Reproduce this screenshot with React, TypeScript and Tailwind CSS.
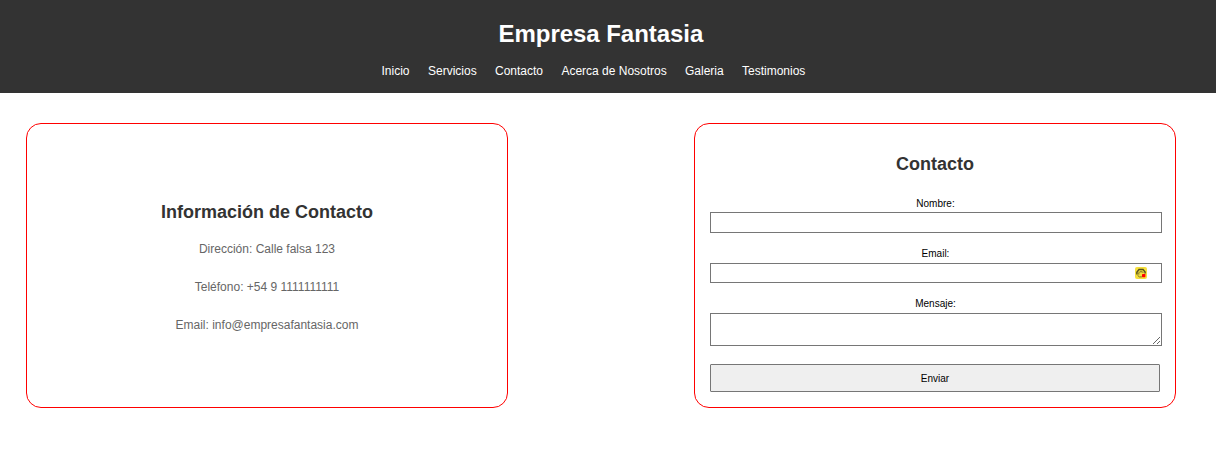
const links = [
  { label: "Inicio", width: "w-[46.5px]" },
  { label: "Servicios", width: "w-[67px]" },
  { label: "Contacto", width: "w-[66.4px]" },
  { label: "Acerca de Nosotros", width: "w-[123.6px]" },
  { label: "Galeria", width: "w-[57px]" },
  { label: "Testimonios", width: "w-[64px]" },
];

function Header() {
  return (
    <header className="flex h-[93px] flex-col bg-[#333333] pt-5 text-white">
      <h1 className="ml-[498.5px] text-[24px] leading-[28px] font-bold tracking-[-0.04px] whitespace-nowrap">Empresa Fantasia</h1>
      <nav className="mt-4 ml-[381.5px] flex text-[12px] leading-[14px] whitespace-nowrap">
        {links.map((l) => (
          <a key={l.label} href="#" className={l.width}>
            {l.label}
          </a>
        ))}
      </nav>
    </header>
  );
}

function Info() {
  return (
    <section className="h-[285px] w-[482px] rounded-[15px] border border-[#ff0000] pt-[78px] text-center">
      <h2 className="text-[18px] leading-[21px] font-bold text-[#333333]">Información de Contacto</h2>
      <div className="mt-[19px] flex flex-col gap-6 text-[12px] leading-[14px] text-[#666666]">
        <p>Dirección: Calle falsa 123</p>
        <p>Teléfono: +54 9 1111111111</p>
        <p>Email: info@empresafantasia.com</p>
      </div>
    </section>
  );
}

function PasswordManagerIcon() {
  return (
    <svg viewBox="0 0 12 12" className="h-3 w-3">
      <rect width="12" height="12" rx="2" fill="#f5df3c" />
      <path d="M1.9 7.6V5.2L4 2.4h4l2.1 2.6v1.4" fill="none" stroke="#55501f" strokeWidth="1.5" />
      <path d="M3.8 7.6V5.8l1-1h2.6l.8 1" fill="none" stroke="#6b6427" strokeWidth="0.9" />
      <path d="M2.5 8.2l1.8 1.7h2.6" fill="none" stroke="#77702c" strokeWidth="1" />
      <rect x="7" y="7" width="3.4" height="3.2" rx="0.6" fill="#ff0000" />
    </svg>
  );
}

function ContactForm() {
  return (
    <form className="flex h-[285px] w-[482px] flex-col rounded-[15px] border border-[#ff0000] pt-[30px] pl-[15px] text-[10px] leading-[12px] text-black">
      <h2 className="w-[450px] text-center text-[18px] leading-[21px] font-bold text-[#333333]">Contacto</h2>
      <label htmlFor="nombre" className="mt-[23px] w-[451px] text-center">Nombre:</label>
      <input id="nombre" className="mt-[2px] h-[21px] w-[452px] border border-[#767676] bg-white px-1 outline-none" />
      <label htmlFor="email" className="mt-[15px] w-[451px] text-center">Email:</label>
      <div className="mt-[3px] flex h-5 w-[452px] items-center border border-[#767676] bg-white pr-[14px]">
        <input id="email" className="h-full min-w-0 flex-1 px-1 outline-none" />
        <PasswordManagerIcon />
      </div>
      <label htmlFor="mensaje" className="mt-[15px] w-[451px] text-center">Mensaje:</label>
      <textarea id="mensaje" className="mt-[3px] h-[33px] w-[452px] shrink-0 resize border border-[#767676] bg-white outline-none" />
      <button type="button" className="mt-[18px] h-7 w-[450px] shrink-0 rounded-[1px] border border-[#767676] bg-[#efefef] pt-[2px]">
        Enviar
      </button>
    </form>
  );
}

export default function App() {
  return (
    <div className="h-[476px] overflow-hidden bg-white font-['Liberation_Sans',Arial,sans-serif]">
      <Header />
      <main className="flex justify-between pt-[30px] pr-10 pl-[26px]">
        <Info />
        <ContactForm />
      </main>
    </div>
  );
}
